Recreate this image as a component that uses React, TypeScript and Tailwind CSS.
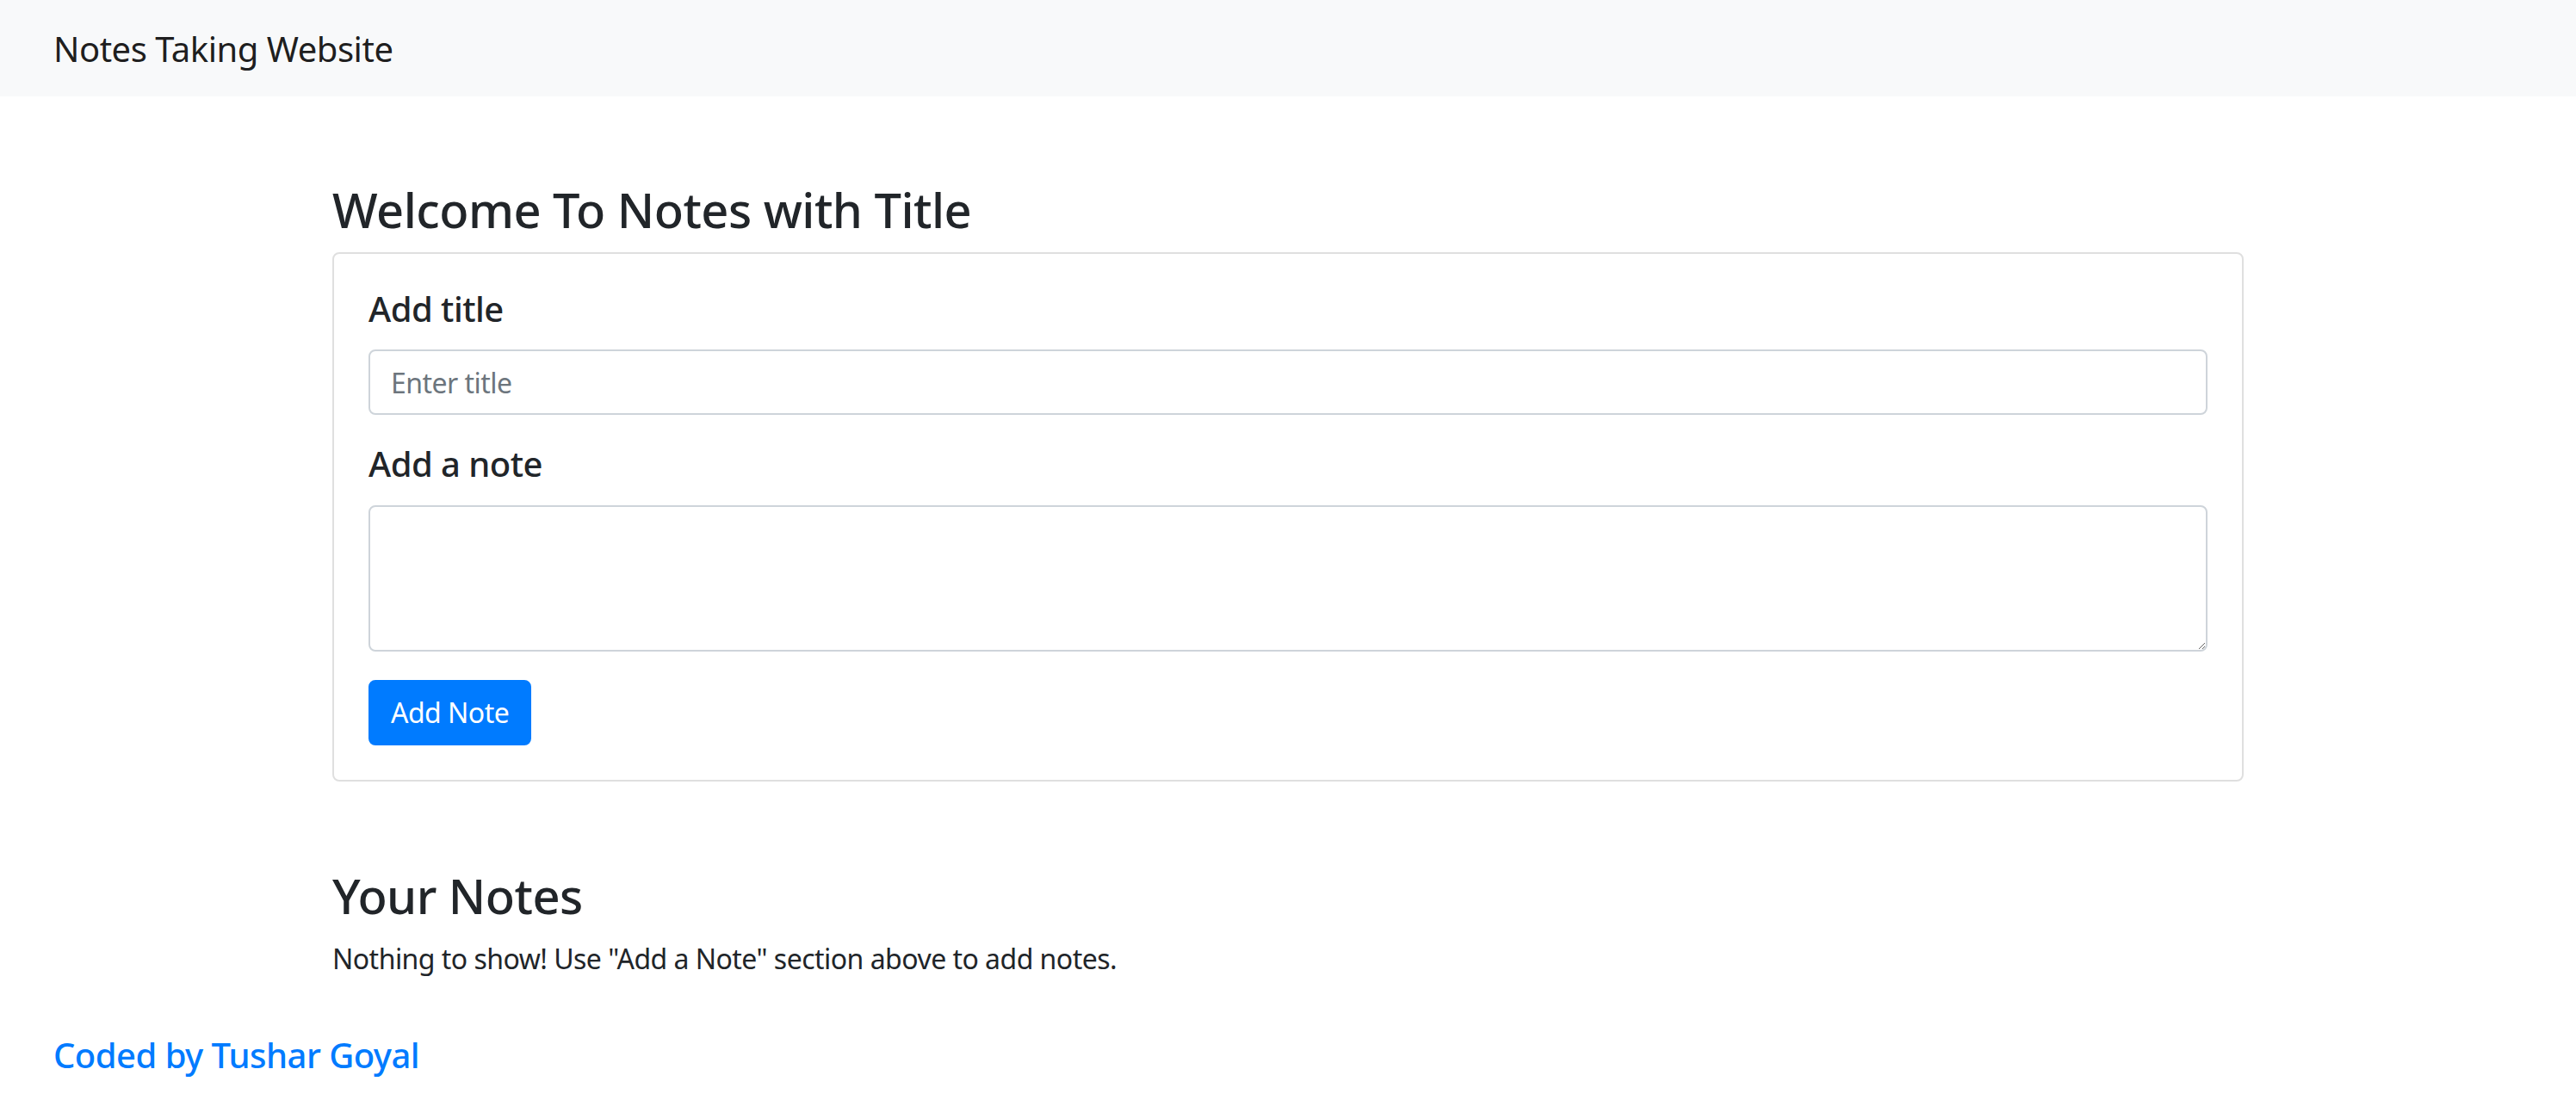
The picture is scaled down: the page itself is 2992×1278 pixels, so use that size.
import React, { useState } from 'react';


interface Note {
    title: string;
    text: string;
}


const App = () => {
    const [title, setTitle] = useState('');
    const [text, setText] = useState('');
    const [notes, setNotes] = useState<Note[]>([]);

    const handleAdd = () => {
        if (!title && !text) return;
        setNotes((prev) => [...prev, { title, text }]);
        setTitle('');
        setText('');
    };

    return (
        <div className="min-h-screen bg-white text-[#212529] font-['Noto_Sans',sans-serif] tracking-[-0.033em]">
            <nav className="h-[112px] bg-[#f8f9fa] px-[62px] flex items-center">
                <a href="#" className="pt-[2px] text-[40px] leading-[60px] tracking-[-0.012em] text-black/90">Notes Taking Website</a>
            </nav>

            <div className="w-[2280px] mx-auto px-[30px] mt-[98px]">
                <h3 className="text-[56px] leading-[1.2] font-medium mb-4">Welcome To Notes with Title</h3>
                <div className="border-2 border-black/[0.125] rounded-[8px] p-[40px]">
                    <div className="mb-[33px]">
                        <label htmlFor="title"
                            className="block text-[40px] leading-[48px] font-medium mb-[23px]">Add title</label>
                        <input id="title"
                            type="text"
                            placeholder="Enter title"
                            value={title}
                            onChange={(e) => setTitle(e.target.value)}
                            className="block w-full h-[76px] border-2 border-[#ced4da] rounded-[8px] px-[24px] text-[32px] text-[#495057] placeholder:text-[#6c757d] outline-none" />
                    </div>
                    <div className="mb-[33px]">
                        <label htmlFor="note"
                            className="block text-[40px] leading-[48px] font-medium mb-[24px]">Add a note</label>
                        <textarea id="note"
                            value={text}
                            onChange={(e) => setText(e.target.value)}
                            className="block w-full h-[170px] border-2 border-[#ced4da] rounded-[8px] px-[24px] py-[12px] text-[32px] leading-[48px] text-[#495057] outline-none" />
                    </div>
                    <button type="button"
                        onClick={handleAdd}
                        className="h-[76px] px-[24px] border-2 border-[#007bff] bg-[#007bff] text-white text-[32px] leading-[48px] rounded-[8px]">Add Note</button>
                </div>

                <h3 className="text-[56px] leading-[1.2] font-medium mb-4 mt-[99px]">Your Notes</h3>
                {notes.length === 0 ? (
                    <p className="text-[32px] leading-[48px]">Nothing to show! Use "Add a Note" section above to add notes.</p>
                ) : (
                    <div className="flex flex-wrap gap-8">
                        {notes.map((n, i) => (
                            <div key={i} className="w-[560px] border-2 border-black/[0.125] rounded-[8px] p-[40px]">
                                <h5 className="text-[40px] font-medium">{n.title}</h5>
                                <p className="text-[32px]">{n.text}</p>
                            </div>
                        ))}
                    </div>
                )}
            </div>

            <footer className="px-[62px] pt-[27px] mt-[31px]">
                <a href="#" className="text-[40px] leading-[60px] font-medium text-[#007bff]">Coded by Tushar Goyal</a>
            </footer>
        </div>
    );
};

export default App;
